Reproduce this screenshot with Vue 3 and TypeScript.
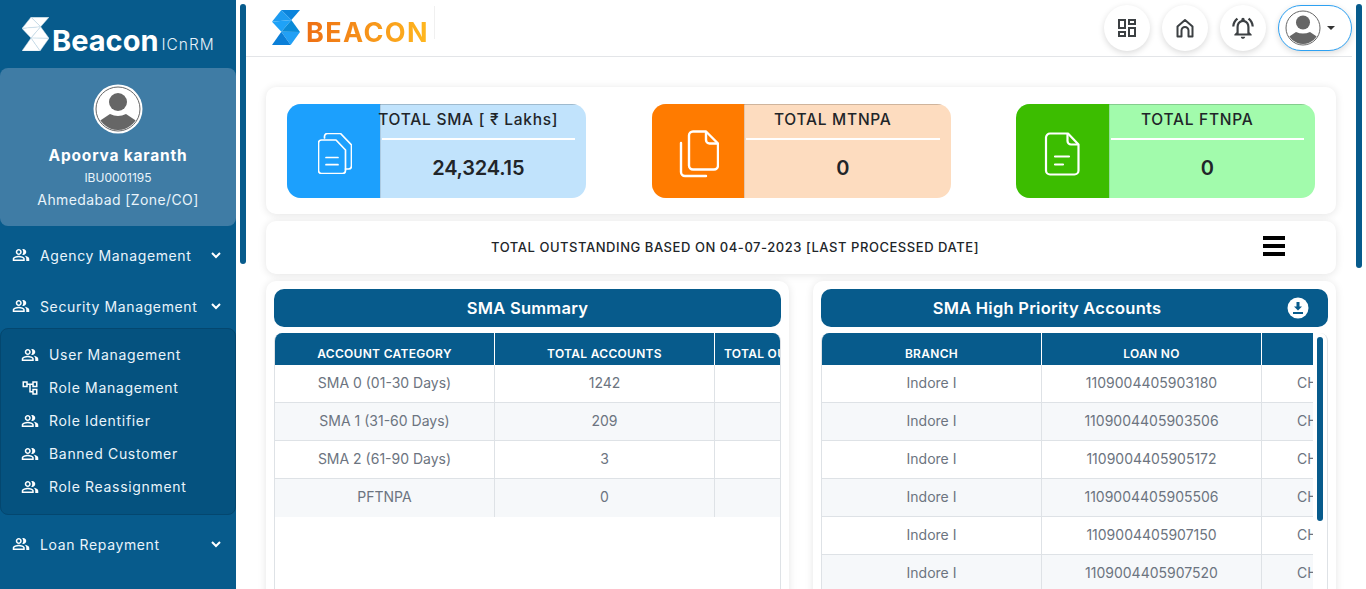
<script setup lang="ts">
const menuUsers = "M16.67 13.13C18.04 14.06 19 15.32 19 17v3h4v-3c0-2.18-3.57-3.47-6.33-3.87zM15 12c2.21 0 4-1.79 4-4s-1.79-4-4-4c-.47 0-.91.1-1.33.24C14.5 5.27 15 6.58 15 8s-.5 2.73-1.33 3.76c.42.14.86.24 1.33.24zM9 12c2.21 0 4-1.79 4-4s-1.79-4-4-4-4 1.79-4 4 1.79 4 4 4zm0-6c1.1 0 2 .9 2 2s-.9 2-2 2-2-.9-2-2 .9-2 2-2zM9 13c-2.67 0-8 1.34-8 4v3h16v-3c0-2.66-5.33-4-8-4zm6 5H3v-.99C3.2 16.29 6.3 15 9 15s5.8 1.29 6 2z";
const tree = "M22 11V3h-7v3H9V3H2v8h7V8h2v10h4v3h7v-8h-7v3h-2V8h2v3h7zM7 9H4V5h3v4zm10 6h3v4h-3v-4zm0-10h3v4h-3V5z";
const subItems = [
  { label: "User Management", icon: menuUsers },
  { label: "Role Management", icon: tree },
  { label: "Role Identifier", icon: menuUsers },
  { label: "Banned Customer", icon: menuUsers },
  { label: "Role Reassignment", icon: menuUsers },
];
const summary = [
  ["SMA 0 (01-30 Days)", "1242"],
  ["SMA 1 (31-60 Days)", "209"],
  ["SMA 2 (61-90 Days)", "3"],
  ["PFTNPA", "0"],
];
const loans = ["1109004405903180", "1109004405903506", "1109004405905172", "1109004405905506", "1109004405907150", "1109004405907520"];
const logoTris = [
  { p: "28,0 84,0 58,30", c: "#0b84dc" },
  { p: "28,0 58,30 0,35", c: "#1d9bf0" },
  { p: "0,35 58,30 28,65", c: "#1ea2f8" },
  { p: "28,65 58,30 84,66", c: "#0a8bd8" },
  { p: "28,65 84,66 56,105", c: "#22a0f5" },
  { p: "0,105 28,65 56,105", c: "#0b7fd8" },
];
</script>

<template>
  <div class="app">
    <aside class="sidebar">
      <div class="brand">
        <svg class="brand-mark" viewBox="0 0 84 105" width="27" height="34">
          <polygon v-for="t in logoTris" :key="t.p" :points="t.p" fill="#fff" stroke="#c6dbe9" stroke-width="1.5" />
        </svg>
        <span class="brand-name">Beacon</span>
        <span class="brand-sub">ICnRM</span>
      </div>
      <section class="profile">
        <svg class="avatar" viewBox="0 0 50 50" width="50" height="50">
          <circle cx="25" cy="25" r="24.5" fill="#fff" />
          <circle cx="25" cy="25" r="22" fill="#fff" stroke="#666" stroke-width="1" />
          <clipPath id="av1"><circle cx="25" cy="25" r="21" /></clipPath>
          <g clip-path="url(#av1)" fill="#666">
            <circle cx="25" cy="18" r="9" />
            <path d="M5 38 L17 30 Q25 34 33 30 L45 38 V50 H5 Z" />
          </g>
        </svg>
        <div class="p-name">Apoorva karanth</div>
        <div class="p-id">IBU0001195</div>
        <div class="p-loc">Ahmedabad [Zone/CO]</div>
      </section>
      <nav class="menu">
        <div class="item">
          <svg class="ic" viewBox="0 0 24 24" width="18" height="18"><path :d="menuUsers" /></svg>
          <span>Agency Management</span>
          <svg class="chev" viewBox="0 0 12 12" width="12" height="12"><path d="M2 4l4 4 4-4" /></svg>
        </div>
        <div class="group">
          <div class="item">
            <svg class="ic" viewBox="0 0 24 24" width="18" height="18"><path :d="menuUsers" /></svg>
            <span>Security Management</span>
            <svg class="chev" viewBox="0 0 12 12" width="12" height="12"><path d="M2 4l4 4 4-4" /></svg>
          </div>
          <div class="sub">
            <div v-for="s in subItems" :key="s.label" class="sub-item">
              <svg class="ic" viewBox="0 0 24 24" width="18" height="18"><path :d="s.icon" /></svg>
              <span>{{ s.label }}</span>
            </div>
          </div>
        </div>
        <div class="item">
          <svg class="ic" viewBox="0 0 24 24" width="18" height="18"><path :d="menuUsers" /></svg>
          <span>Loan Repayment</span>
          <svg class="chev" viewBox="0 0 12 12" width="12" height="12"><path d="M2 4l4 4 4-4" /></svg>
        </div>
      </nav>
    </aside>
    <div class="thumb thumb-left"></div>

    <main class="main">
      <header class="topbar">
        <div class="logo">
          <svg viewBox="0 0 84 105" width="28" height="35">
            <polygon v-for="t in logoTris" :key="t.p" :points="t.p" :fill="t.c" />
          </svg>
          <span class="logo-text">BEACON</span>
        </div>
        <div class="actions">
          <button class="round">
            <svg viewBox="0 0 24 24" width="24" height="24"><path fill="#3c4043" d="M19 5v2h-4V5h4M9 5v6H5V5h4m10 8v6h-4v-6h4M9 17v2H5v-2h4M21 3h-8v6h8V3zM11 3H3v10h8V3zm10 8h-8v10h8V11zm-10 4H3v6h8v-6z" /></svg>
          </button>
          <button class="round">
            <svg viewBox="0 0 24 24" width="24" height="24" fill="none" stroke="#3c4043" stroke-width="2" stroke-linejoin="round"><path d="M4.5 20.5v-10L12 4l7.500 6.500v10h-4v-6a3.500 3.500 0 0 0-7 0v6z" /></svg>
          </button>
          <button class="round">
            <svg viewBox="0 0 24 24" width="26" height="26"><path fill="#3c4043" d="M7.580 4.080 6.150 2.650C3.750 4.480 2.170 7.300 2.030 10.500h2c.15-2.650 1.510-4.970 3.550-6.420zm12.390 6.420h2c-.15-3.200-1.730-6.020-4.120-7.850l-1.420 1.430c2.020 1.450 3.390 3.770 3.540 6.420zM18 11c0-3.070-1.640-5.640-4.500-6.320V4c0-.83-.67-1.500-1.500-1.500s-1.500.67-1.500 1.500v.68C7.630 5.360 6 7.920 6 11v5l-2 2v1h16v-1l-2-2v-5zm-2 6H8v-6c0-2.480 1.510-4.500 4-4.500s4 2.020 4 4.500v6zm-4 5c.14 0 .27-.01.4-.04.65-.14 1.180-.58 1.440-1.180.1-.24.15-.5.15-.78h-4c.01 1.100.9 2 2.010 2z" /></svg>
          </button>
          <button class="pill">
            <svg viewBox="0 0 36 36" width="36" height="36">
              <circle cx="18" cy="18" r="17" fill="#fff" stroke="#666" stroke-width="1" />
              <clipPath id="av2"><circle cx="18" cy="18" r="16" /></clipPath>
              <g clip-path="url(#av2)" fill="#666">
                <circle cx="18" cy="12.500" r="7" />
                <path d="M2 28 L11 22 Q18 25 25 22 L34 28 V36 H2 Z" />
              </g>
            </svg>
            <span class="caret"></span>
          </button>
        </div>
      </header>

      <div class="content">
        <section class="card stats">
          <article class="stat sky">
            <div class="stat-icon">
              <svg class="sky-ic" viewBox="0 0 34 41" width="34" height="41" fill="none" stroke="#fff" stroke-width="1.700" stroke-linejoin="round" stroke-linecap="round">
                <path d="M6.500 5V3.500a3 3 0 0 1 3-3h13L33.500 12v21a3 3 0 0 1-3 3h-3" />
                <path d="M3.500 7h14.500l9.500 10v20.500a3 3 0 0 1-3 3H3.500a3 3 0 0 1-3-3V10a3 3 0 0 1 3-3z" />
                <path d="M8 24.500h12M8 31.700h12" />
              </svg>
            </div>
            <div class="stat-body">
              <h3>TOTAL SMA [ ₹ Lakhs]</h3>
              <div class="rule"></div>
              <div class="val">24,324.15</div>
            </div>
          </article>
          <article class="stat amber">
            <div class="stat-icon">
              <svg class="amber-ic" viewBox="0 0 40 48" width="40" height="48" fill="none" stroke="#fff" stroke-width="2.400" stroke-linejoin="round" stroke-linecap="round">
                <path d="M14 1.500h13l12 12v22a4 4 0 0 1-4 4H14a4 4 0 0 1-4-4v-30a4 4 0 0 1 4-4z" />
                <path d="M27 2v8a3.500 3.500 0 0 0 3.500 3.500H38" />
                <path d="M2 13v29a4 4 0 0 0 4 4h21" />
              </svg>
            </div>
            <div class="stat-body">
              <h3>TOTAL MTNPA</h3>
              <div class="rule"></div>
              <div class="val">0</div>
            </div>
          </article>
          <article class="stat leaf">
            <div class="stat-icon">
              <svg viewBox="0 0 36 44" width="36" height="44" fill="none" stroke="#fff" stroke-width="2.200" stroke-linejoin="round" stroke-linecap="round">
                <path d="M6 1.500h18l10.500 11v26a4 4 0 0 1-4 4H6a4 4 0 0 1-4-4v-33a4 4 0 0 1 4-4z" />
                <path d="M23.500 2v7a3.500 3.500 0 0 0 3.500 3.500h7" />
                <path d="M11 24.500h14M11 32.500h8" />
              </svg>
            </div>
            <div class="stat-body">
              <h3>TOTAL FTNPA</h3>
              <div class="rule"></div>
              <div class="val">0</div>
            </div>
          </article>
        </section>

        <section class="card bar">
          <span class="bar-text">TOTAL OUTSTANDING BASED ON 04-07-2023 [LAST PROCESSED DATE]</span>
          <span class="burger"><i></i><i></i><i></i></span>
        </section>

        <div class="panels">
          <section class="card panel">
            <div class="panel-head"><span class="panel-title">SMA Summary</span></div>
            <div class="tbl-wrap">
              <div class="tbl-clip">
                <table>
                  <thead><tr><th>ACCOUNT CATEGORY</th><th>TOTAL ACCOUNTS</th><th class="th-left">TOTAL OUTSTANDING</th></tr></thead>
                  <tbody>
                    <tr v-for="r in summary" :key="r[0]"><td>{{ r[0] }}</td><td>{{ r[1] }}</td><td></td></tr>
                  </tbody>
                </table>
              </div>
            </div>
          </section>
          <section class="card panel">
            <div class="panel-head">
              <span class="panel-title">SMA High Priority Accounts</span>
              <svg class="dl" viewBox="0 0 22 22" width="22" height="22">
                <circle cx="11" cy="11" r="10.500" fill="#fff" />
                <path d="M9.500 5h3v4.500h2.500L11 13.500 7 9.500h2.500z M6 15h10v2H6z" fill="#075b8c" />
              </svg>
            </div>
            <div class="tbl-wrap tbl-right">
              <div class="tbl-clip">
                <table>
                  <thead><tr><th>BRANCH</th><th>LOAN NO</th><th></th></tr></thead>
                  <tbody>
                    <tr v-for="l in loans" :key="l"><td>Indore I</td><td>{{ l }}</td><td class="td-left">CH</td></tr>
                  </tbody>
                </table>
              </div>
              <div class="thumb-inner"></div>
            </div>
          </section>
        </div>
      </div>
    </main>
    <div class="thumb thumb-right"></div>
  </div>
</template>

<style>
html, body { margin: 0; padding: 0; background: #fff; overflow: hidden; }
</style>

<style scoped>
.app {
  position: relative;
  display: flex;
  width: 1366px;
  height: 589px;
  overflow: hidden;
  font-family: Inter, "Open Sans", sans-serif;
  color: #212529;
  background: #fff;
}
.sidebar {
  flex: 0 0 236px;
  background: #075b8c;
  color: #e9f4fb;
  display: flex;
  flex-direction: column;
}
.brand {
  height: 68px;
  flex: none;
  display: flex;
  align-items: center;
  padding: 0 0 0 22px;
  box-sizing: border-box;
}
.brand-mark { margin-right: 3px; }
.brand-name { font-size: 29px; font-weight: 700; color: #fff; margin-top: 13px; line-height: 34px; }
.brand-sub { font-size: 15.500px; font-weight: 300; color: #e6f1f8; margin: 21px 0 0 3px; letter-spacing: 1px; }
.profile {
  height: 158px;
  flex: none;
  box-sizing: border-box;
  background: #3f7ca5;
  border-radius: 8px;
  display: flex;
  flex-direction: column;
  align-items: center;
  padding-top: 16px;
}
.avatar { display: block; }
.p-name { font-size: 15.500px; font-weight: 700; color: #fff; margin-top: 12px; line-height: 20px; letter-spacing: 0.8px; }
.p-id { font-size: 12px; line-height: 16px; margin-top: 4px; }
.p-loc { font-size: 14px; line-height: 20px; margin-top: 4px; letter-spacing: 0.4px; }
.menu { display: flex; flex-direction: column; gap: 9px; padding-top: 9px; }
.item {
  height: 42px;
  box-sizing: border-box;
  display: flex;
  align-items: center;
  padding: 0 14px 2px 12px;
  font-size: 14px;
  letter-spacing: 0.62px;
}
.item span { margin-left: 10px; flex: 1; white-space: nowrap; }
.ic { fill: #fff; flex: none; }
.chev { fill: none; stroke: #fff; stroke-width: 2; flex: none; }
.sub {
  height: 187px;
  box-sizing: border-box;
  border: 1px solid #04476f;
  border-radius: 8px;
  background: #05527f;
  padding: 10px 0;
}
.sub-item {
  height: 33px;
  box-sizing: border-box;
  display: flex;
  align-items: center;
  padding: 0 0 2px 20px;
  font-size: 14px;
  letter-spacing: 0.68px;
}
.sub-item span { margin-left: 10px; white-space: nowrap; }

.thumb { position: absolute; width: 6px; background: #075b8c; border-radius: 3px; top: 4px; }
.thumb-left { left: 240px; height: 260px; }
.thumb-right { left: 1356px; height: 264px; }

.main { flex: 1; margin-left: 10px; min-width: 0; display: flex; flex-direction: column; }
.topbar {
  height: 57px;
  flex: none;
  box-sizing: border-box;
  margin-right: 14px;
  border-bottom: 1px solid #e3e5e8;
  display: flex;
  justify-content: space-between;
  padding: 5px 0 0 26px;
}
.logo { display: flex; align-items: flex-start; height: 33px; border-right: 1px solid #f0f0f0; padding-right: 5px; margin-top: 1px; }
.logo svg { margin-top: 4px; margin-right: 6px; flex: none; }
.logo-text {
  font-family: Inter, sans-serif;
  font-size: 27px;
  font-weight: 700;
  line-height: 32px;
  margin-top: 11px;
  letter-spacing: 1.4px;
  background: linear-gradient(90deg, #ee6f14, #ffb81f);
  -webkit-background-clip: text;
  background-clip: text;
  color: transparent;
}
.actions { display: flex; gap: 12px; align-items: flex-start; }
.round, .pill {
  height: 46px;
  background: #fff;
  border: 0;
  padding: 0;
  display: flex;
  align-items: center;
  justify-content: center;
  box-shadow: 0 2px 6px rgba(0, 0, 0, 0.15);
}
.round { width: 46px; border-radius: 50%; }
.pill { width: 74px; border-radius: 23px; border: 1px solid #2ea1f2; box-sizing: border-box; justify-content: flex-start; padding-left: 6px; }
.caret { width: 0; height: 0; border: 4px solid transparent; border-top-color: #333; border-bottom: 0; margin-left: 6px; margin-top: -1px; }

.content { padding: 30px 30px 0 20px; display: flex; flex-direction: column; gap: 7px; }
.card { background: #fff; border-radius: 10px; box-shadow: 0 1px 8px rgba(0, 0, 0, 0.11); flex: none; }
.stats {
  height: 127px;
  box-sizing: border-box;
  padding: 17px 21px 16px;
  display: flex;
  justify-content: space-between;
}
.stat { width: 299px; height: 94px; display: flex; border-radius: 14px; overflow: hidden; box-sizing: border-box; }
.stat-icon { width: 92.500px; flex: none; display: flex; align-items: center; justify-content: center; padding-top: 5px; box-sizing: border-box; box-shadow: 1px 0 0 rgba(0,0,0,.1); }
.amber-ic { margin-left: 2px; }
.sky-ic { margin-left: 4px; }
.stat-body { flex: 1; min-width: 0; padding: 0 11px 0 2px; box-shadow: inset 0 1px 0 rgba(0,0,0,.18); }
.stat-body h3 {
  margin: 0;
  height: 34px;
  padding: 0 20px 2px 0;
  display: flex;
  justify-content: center;
  align-items: center;
  font-size: 15.500px;
  font-weight: 500;
  line-height: 30px;
  white-space: nowrap;
  letter-spacing: 0.75px;
  box-sizing: border-box;
}
.rule { height: 2px; background: #fff; }
.val { text-align: center; font-size: 20px; font-weight: 600; line-height: 56px; letter-spacing: -0.2px; }
.sky { background: #c1e3fc; } .sky .stat-icon { background: #1ca0fd; }
.amber { background: #fddcbf; } .amber .stat-icon { background: #ff7b00; }
.leaf { background: #a2fbac; } .leaf .stat-icon { background: #3cbd00; }

.bar { height: 53px; display: flex; align-items: center; padding-right: 51px; }
.bar-text { flex: 1; text-align: center; font-size: 13px; font-weight: 500; letter-spacing: 0.55px; white-space: nowrap; margin-bottom: 2px; }
.burger { width: 22px; margin: 0 0 4px 59px; display: flex; flex-direction: column; gap: 4px; }
.burger i { display: block; height: 4px; background: #000; }

.panels { display: grid; grid-template-columns: 523px 523px; gap: 24px; }
.panel { height: 400px; padding: 8px; box-sizing: border-box; }
.panel-head {
  height: 38px;
  background: #075b8c;
  border-radius: 10px;
  color: #fff;
  display: flex;
  align-items: center;
  margin-bottom: 6px;
}
.panel-title { flex: 1; text-align: center; font-size: 16.500px; font-weight: 600; letter-spacing: 0.25px; white-space: nowrap; }
.dl { margin: 0 19px 0 14px; flex: none; }
.tbl-wrap {
  position: relative;
  height: 340px;
  border: 1px solid #dee2e6;
  border-top: 0;
  border-radius: 8px 8px 0 0;
  overflow: hidden;
  box-sizing: border-box;
}
.tbl-clip { height: 100%; overflow: hidden; }
.tbl-right .tbl-clip { width: 491px; }
.thumb-inner { position: absolute; left: 495px; top: 4px; width: 6px; height: 184px; background: #075b8c; border-radius: 3px; }
table { border-collapse: separate; border-spacing: 0; table-layout: fixed; width: 660px; }
th {
  width: 220px;
  height: 32px;
  box-sizing: border-box;
  background: #075b8c;
  color: #fff;
  font-size: 12px;
  font-weight: 600;
  padding: 13px 0 4px;
  line-height: 14px;
  text-align: center;
  border-right: 1px solid #fff;
  white-space: nowrap;
  letter-spacing: 0.3px;
}
th.th-left { text-align: left; padding-left: 9px; }
td {
  height: 38px;
  box-sizing: border-box;
  text-align: center;
  font-size: 14px;
  color: #6c7480;
  border-right: 1px solid #dee2e6;
  border-bottom: 1px solid #dee2e6;
  white-space: nowrap;
  padding: 0 0 2px;
}
td.td-left { text-align: left; padding-left: 35px; }
tbody tr:nth-child(even) td { background: #f6f8fa; }
tbody tr:last-child td { border-bottom: 0; padding-bottom: 3px; }
.tbl-right tbody tr:last-child td { border-bottom: 1px solid #dee2e6; padding-bottom: 2px; }
</style>
